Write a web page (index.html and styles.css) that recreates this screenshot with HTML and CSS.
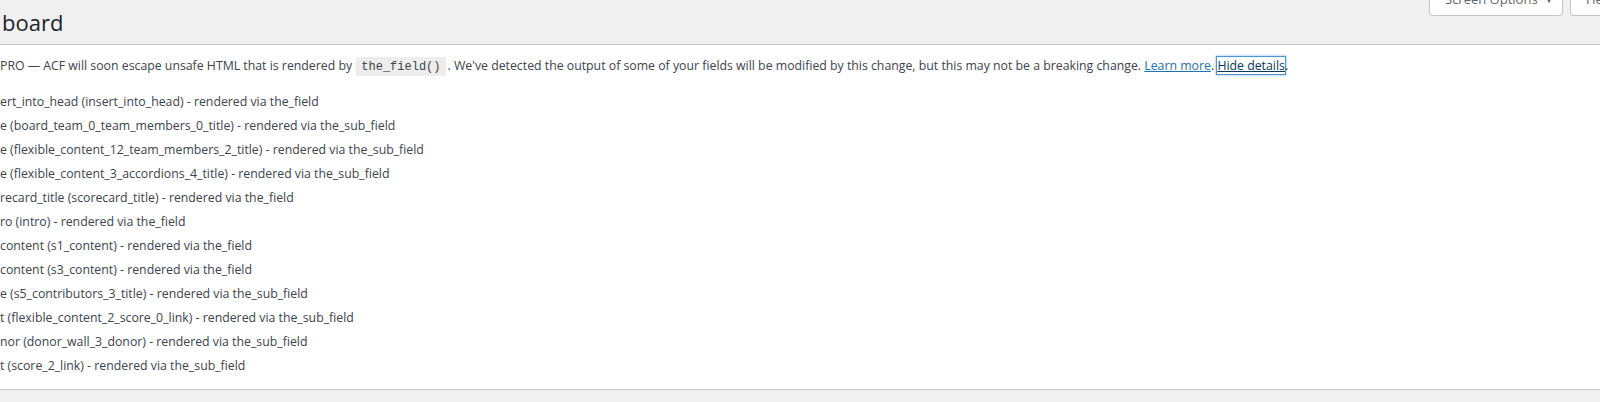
FILE: index.html
```html
<!DOCTYPE html>
<html lang="en">
<head>
<meta charset="utf-8">
<title>Dashboard</title>
<link rel="stylesheet" href="styles.css">
</head>
<body>
<div class="wrap">
  <header class="top">
    <h1 class="title">board</h1>
    <div class="meta-links">
      <button class="meta-btn">Screen Options <span class="arrow">▼</span></button>
      <button class="meta-btn help">Help</button>
    </div>
  </header>
  <div class="notice">
    <p class="msg">PRO — ACF will soon escape unsafe HTML that is rendered by <code>the_field()</code>. We've detected the output of some of your fields will be modified by this change, but this may not be a breaking change. <a href="#" class="link">Learn more</a>. <a href="#" class="link focus">Hide details</a>.</p>
    <ul class="fields">
      <li>ert_into_head (insert_into_head) - rendered via the_field</li>
      <li>e (board_team_0_team_members_0_title) - rendered via the_sub_field</li>
      <li>e (flexible_content_12_team_members_2_title) - rendered via the_sub_field</li>
      <li>e (flexible_content_3_accordions_4_title) - rendered via the_sub_field</li>
      <li>recard_title (scorecard_title) - rendered via the_field</li>
      <li>ro (intro) - rendered via the_field</li>
      <li>content (s1_content) - rendered via the_field</li>
      <li>content (s3_content) - rendered via the_field</li>
      <li>e (s5_contributors_3_title) - rendered via the_sub_field</li>
      <li>t (flexible_content_2_score_0_link) - rendered via the_sub_field</li>
      <li>nor (donor_wall_3_donor) - rendered via the_sub_field</li>
      <li>t (score_2_link) - rendered via the_sub_field</li>
    </ul>
  </div>
</div>
</body>
</html>
```

FILE: styles.css
```css
html, body {
  margin: 0;
  padding: 0;
}
body {
  background: #f0f0f1;
  color: #3c434a;
  font-family: "Open Sans", "Noto Sans", sans-serif;
  font-size: 12.3px;
  line-height: 1.5;
  overflow: hidden;
  width: 1600px;
  height: 402px;
}
.wrap {
  width: 1600px;
}
.top {
  height: 44px;
  display: flex;
  justify-content: space-between;
  align-items: flex-start;
}
.title {
  margin: 0;
  padding: 7px 0 0 2px;
  font-size: 22px;
  font-weight: 400;
  line-height: 30px;
  color: #1d2327;
}
.meta-links {
  display: flex;
  gap: 7px;
  margin-top: -12px;
  margin-right: -40px;
}
.meta-btn {
  height: 28px;
  background: #fff;
  border: 1px solid #c3c4c7;
  border-top: none;
  border-radius: 0 0 4px 4px;
  color: #646970;
  font-family: inherit;
  font-size: 13px;
  line-height: 22px;
  padding: 0 0 0 15px;
  width: 134px;
  display: flex;
  align-items: flex-start;
  gap: 6px;
}
.meta-btn .arrow {
  font-size: 11px;
  line-height: 22px;
}
.meta-btn.help {
  width: 70px;
}
.notice {
  background: #fff;
  border-top: 1px solid #c3c4c7;
  border-bottom: 1px solid #c3c4c7;
  height: 344px;
  overflow: hidden;
}
.msg {
  margin: 11px 0 0 0;
  line-height: 19.5px;
}
code {
  font-family: "Liberation Mono", monospace;
  font-size: 12px;
  background: rgba(0, 0, 0, 0.07);
  padding: 3px 5px 2px;
  margin: 0 2px 0 1px;
}
.link {
  color: #2271b1;
  text-decoration: underline;
}
.focus {
  color: #043959;
  box-shadow: 0 0 0 1px #4f94d4, 0 0 2px 1px rgba(79, 148, 212, 0.8);
  outline: 1px solid transparent;
}
.fields {
  list-style: none;
  margin: 15.5px 0 0 0;
  padding: 0;
}
.fields li {
  line-height: 18px;
  margin-bottom: 6px;
}
```
